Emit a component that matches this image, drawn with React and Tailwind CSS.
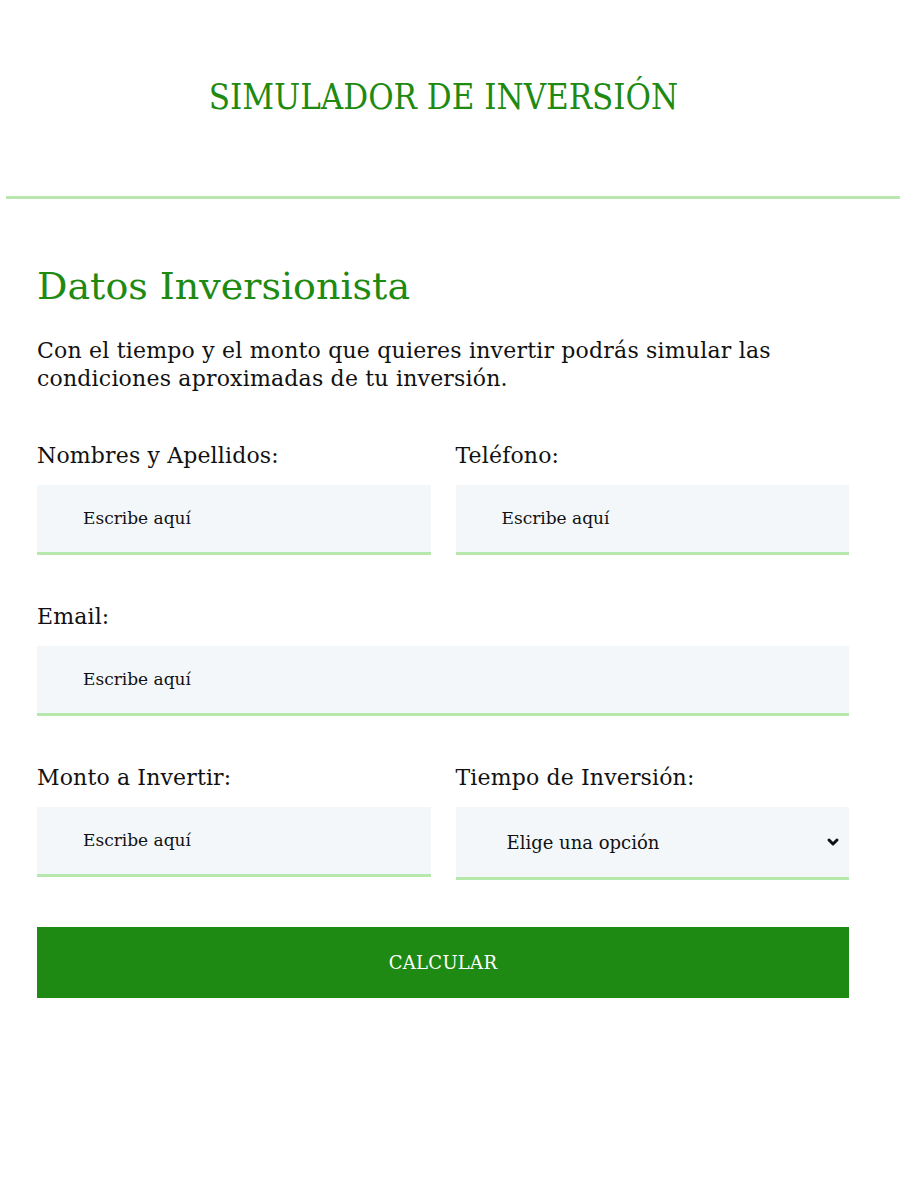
import React from "react";

const serif = { fontFamily: '"DejaVu Serif", "Liberation Serif", serif' };

function Field({ label, children, className = "" }) {
  return (
    <div className={"flex flex-col " + className}>
      <label className="text-[22px] leading-[28px] tracking-[0.15px] text-[#111] mb-[15px]">{label}</label>
      {children}
    </div>
  );
}

function Input() {
  return (
    <div className="h-[70px] bg-[#f3f7fa] border-b-[3px] border-[#b6e8ae] flex items-center pl-[46px] text-[17px] text-[#111]">
      Escribe aquí
    </div>
  );
}

export default function App() {
  return (
    <div className="w-[900px] min-h-[1200px] bg-white" style={serif}>
      <div className="h-[196px] flex items-start justify-center pt-[76px] pr-[13px]">
        <h1 className="text-[34.5px] leading-[42px] text-[#1e8a12]" style={{ fontFamily: '"DejaVu Serif Condensed", "DejaVu Serif", serif' }}>
          SIMULADOR DE INVERSIÓN
        </h1>
      </div>
      <div className="ml-[6px] h-[3px] bg-[#b8e8b0]" />
      <div className="pl-[37px] pr-[51px] pt-[63px]">
        <h2 className="text-[38px] leading-[48px] text-[#1e8a12]">Datos Inversionista</h2>
        <p className="mt-[27px] text-[22px] leading-[28px] tracking-[0.2px] text-[#111]">
          Con el tiempo y el monto que quieres invertir podrás simular las condiciones aproximadas de tu inversión.
        </p>
        <div className="mt-[49px] grid grid-cols-2 gap-x-[25px] gap-y-[48px]">
          <Field label="Nombres y Apellidos:"><Input /></Field>
          <Field label="Teléfono:"><Input /></Field>
          <Field label="Email:" className="col-span-2"><Input /></Field>
          <Field label="Monto a Invertir:"><Input /></Field>
          <Field label="Tiempo de Inversión:">
            <div className="h-[73px] bg-[#f3f7fa] border-b-[3px] border-[#b6e8ae] flex items-center justify-between pl-[51px] pr-[8px] text-[18px] text-[#111]">
              <span>Elige una opción</span>
              <svg width="16" height="16" viewBox="0 0 24 24" fill="none" stroke="#111" strokeWidth="4.5" strokeLinecap="round" strokeLinejoin="round"><path d="M6 9l6 6 6-6" /></svg>
            </div>
          </Field>
        </div>
        <button className="mt-[47px] w-full h-[71px] bg-[#1f8a13] text-white text-[18px] tracking-[0.3px]">CALCULAR</button>
      </div>
    </div>
  );
}
